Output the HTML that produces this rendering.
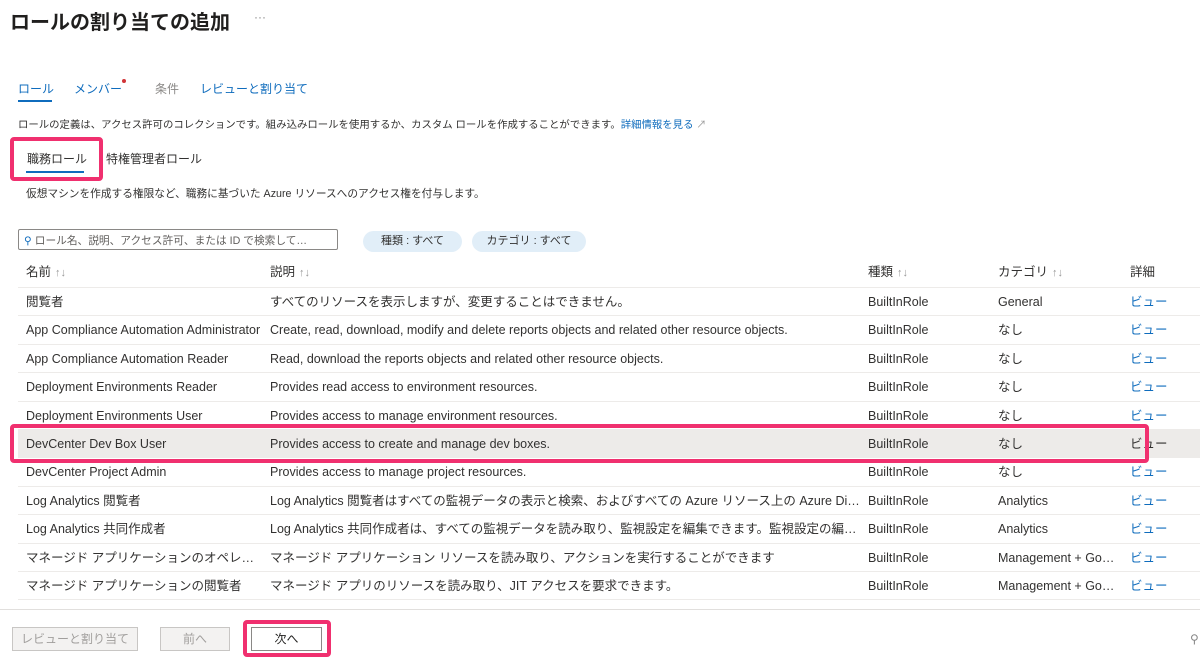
<!DOCTYPE html>
<html><head><meta charset="utf-8"><style>
*{margin:0;padding:0;box-sizing:border-box}
body{width:1200px;height:657px;overflow:hidden;background:#fff;font-family:"Liberation Sans","Noto Sans CJK JP",sans-serif;color:#323130;position:relative;font-size:12.5px}
.a{position:absolute;white-space:nowrap}
.blue{color:#0f6cbd}
.row{position:absolute;left:18px;width:1182px;height:28.4px;border-bottom:1px solid #edebe9}
.row>span{position:absolute;top:0;line-height:28px;white-space:nowrap;overflow:hidden;text-overflow:ellipsis}
.ar{color:#999;font-size:11px;margin-left:4px}
.c1{left:8px;width:240px}.c2{left:252px;width:592px}.c3{left:850px}.c4{left:980px;width:122px}.c5{left:1112px;color:#0f6cbd}
.pink{position:absolute;border:4px solid #f0306f;border-radius:4px}
.btn{position:absolute;height:24px;border:1px solid #c8c6c4;font-size:12px;text-align:center;line-height:22px}
</style></head><body>
<div class="a" style="left:10px;top:6px;font-size:20px;font-weight:bold;color:#201f1e">ロールの割り当ての追加</div>
<div class="a" style="left:254px;top:10px;font-size:12px;color:#888">···</div>

<div class="a blue" style="left:18px;top:80px;font-size:12px">ロール</div>
<div class="a" style="left:18px;top:100px;width:34px;height:2px;background:#0f6cbd"></div>
<div class="a blue" style="left:74px;top:80px;font-size:12px">メンバー</div>
<div class="a" style="left:122px;top:79px;width:4px;height:4px;border-radius:2px;background:#d13438"></div>
<div class="a" style="left:155px;top:80px;font-size:12px;color:#8a8886">条件</div>
<div class="a blue" style="left:200px;top:80px;font-size:12px">レビューと割り当て</div>

<div class="a" style="left:18px;top:116px;font-size:10.4px">ロールの定義は、アクセス許可のコレクションです。組み込みロールを使用するか、カスタム ロールを作成することができます。<span class="blue">詳細情報を見る</span> <span style="color:#999;font-size:10px">↗</span></div>

<div class="a" style="left:27px;top:150px;font-size:12px">職務ロール</div>
<div class="a" style="left:26px;top:171px;width:58px;height:2px;background:#0f6cbd"></div>
<div class="a" style="left:106px;top:150px;font-size:12px">特権管理者ロール</div>
<div class="pink" style="left:10px;top:137px;width:93px;height:44px"></div>

<div class="a" style="left:26px;top:186px;font-size:10.7px">仮想マシンを作成する権限など、職務に基づいた Azure リソースへのアクセス権を付与します。</div>

<div class="a" style="left:18px;top:229px;width:320px;height:21px;border:1px solid #8a8886;border-radius:2px"></div>
<div class="a" style="left:24px;top:233px;font-size:10.7px;color:#605e5c"><span style="color:#0f6cbd">⚲</span> ロール名、説明、アクセス許可、または ID で検索して…</div>
<div class="a" style="left:363px;top:231px;width:99px;height:21px;border-radius:11px;background:#e1eef8;font-size:11px;text-align:center;line-height:21px">種類 : すべて</div>
<div class="a" style="left:472px;top:231px;width:114px;height:21px;border-radius:11px;background:#e1eef8;font-size:11px;text-align:center;line-height:21px">カテゴリ : すべて</div>

<div class="row" style="top:258px;height:30px"><span class="c1">名前<span class="ar">↑↓</span></span><span class="c2">説明<span class="ar">↑↓</span></span><span class="c3">種類<span class="ar">↑↓</span></span><span class="c4">カテゴリ<span class="ar">↑↓</span></span><span style="left:1112px">詳細</span></div>

<div class="row" style="top:288px"><span class="c1">閲覧者</span><span class="c2">すべてのリソースを表示しますが、変更することはできません。</span><span class="c3">BuiltInRole</span><span class="c4">General</span><span class="c5">ビュー</span></div>
<div class="row" style="top:316.4px"><span class="c1">App Compliance Automation Administrator</span><span class="c2">Create, read, download, modify and delete reports objects and related other resource objects.</span><span class="c3">BuiltInRole</span><span class="c4">なし</span><span class="c5">ビュー</span></div>
<div class="row" style="top:344.8px"><span class="c1">App Compliance Automation Reader</span><span class="c2">Read, download the reports objects and related other resource objects.</span><span class="c3">BuiltInRole</span><span class="c4">なし</span><span class="c5">ビュー</span></div>
<div class="row" style="top:373.2px"><span class="c1">Deployment Environments Reader</span><span class="c2">Provides read access to environment resources.</span><span class="c3">BuiltInRole</span><span class="c4">なし</span><span class="c5">ビュー</span></div>
<div class="row" style="top:401.6px"><span class="c1">Deployment Environments User</span><span class="c2">Provides access to manage environment resources.</span><span class="c3">BuiltInRole</span><span class="c4">なし</span><span class="c5">ビュー</span></div>
<div class="row" style="top:430px;background:#edebe9"><span class="c1">DevCenter Dev Box User</span><span class="c2">Provides access to create and manage dev boxes.</span><span class="c3">BuiltInRole</span><span class="c4">なし</span><span class="c5" style="color:#323130">ビュー</span></div>
<div class="row" style="top:458.4px"><span class="c1">DevCenter Project Admin</span><span class="c2">Provides access to manage project resources.</span><span class="c3">BuiltInRole</span><span class="c4">なし</span><span class="c5">ビュー</span></div>
<div class="row" style="top:486.8px"><span class="c1">Log Analytics 閲覧者</span><span class="c2">Log Analytics 閲覧者はすべての監視データの表示と検索、およびすべての Azure リソース上の Azure Diagnostics 設定の表示</span><span class="c3">BuiltInRole</span><span class="c4">Analytics</span><span class="c5">ビュー</span></div>
<div class="row" style="top:515.2px"><span class="c1">Log Analytics 共同作成者</span><span class="c2">Log Analytics 共同作成者は、すべての監視データを読み取り、監視設定を編集できます。監視設定の編集には、VM 拡張機能</span><span class="c3">BuiltInRole</span><span class="c4">Analytics</span><span class="c5">ビュー</span></div>
<div class="row" style="top:543.6px"><span class="c1">マネージド アプリケーションのオペレーター ロール</span><span class="c2">マネージド アプリケーション リソースを読み取り、アクションを実行することができます</span><span class="c3">BuiltInRole</span><span class="c4">Management + Governance</span><span class="c5">ビュー</span></div>
<div class="row" style="top:572px"><span class="c1">マネージド アプリケーションの閲覧者</span><span class="c2">マネージド アプリのリソースを読み取り、JIT アクセスを要求できます。</span><span class="c3">BuiltInRole</span><span class="c4">Management + Governance</span><span class="c5">ビュー</span></div>

<div class="pink" style="left:10px;top:424px;width:1139px;height:39px"></div>

<div class="a" style="left:0;top:609px;width:1200px;height:1px;background:#e1dfdd"></div>
<div class="btn" style="left:12px;top:627px;width:126px;color:#a19f9d;background:#f3f2f1">レビューと割り当て</div>
<div class="btn" style="left:160px;top:627px;width:70px;color:#a19f9d;background:#f3f2f1">前へ</div>
<div class="btn" style="left:251px;top:627px;width:71px;border-color:#8a8886;color:#201f1e;background:#fff">次へ</div>
<div class="pink" style="left:243px;top:620px;width:88px;height:37px"></div>
<div class="a" style="left:1190px;top:632px;font-size:12px;color:#888">⚲</div>
</body></html>
